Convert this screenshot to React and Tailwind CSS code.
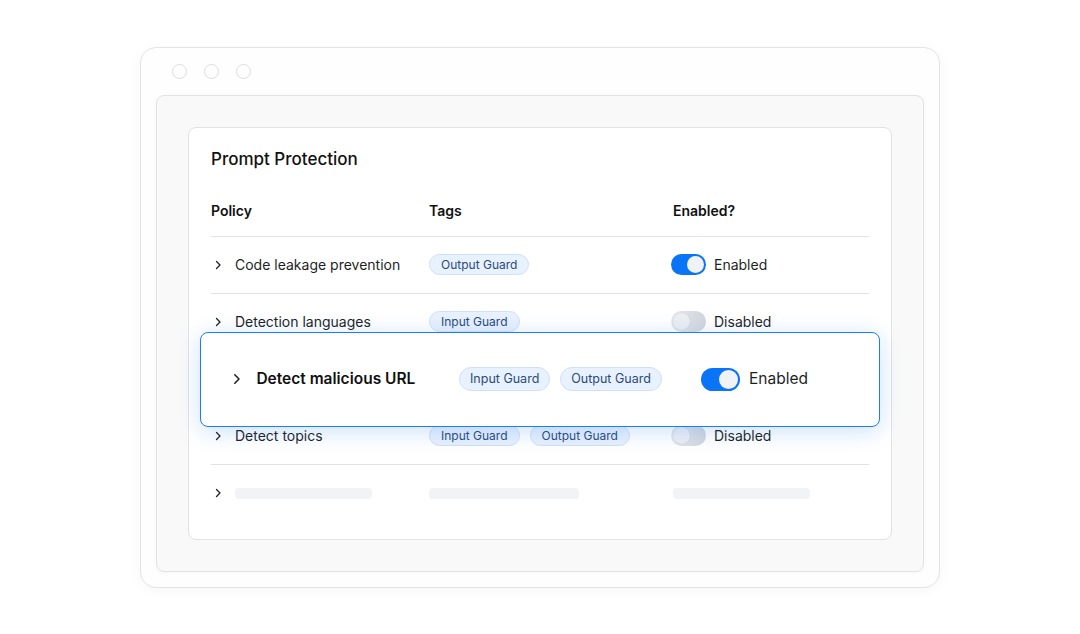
import React from "react";

const Chevron = ({ size = 1 }) => (
  <svg width={7 * size} height={10 * size} viewBox="0 0 7 10" fill="none" className="shrink-0">
    <path d="M1.5 1.5 L5 5 L1.5 8.5" stroke="#1f1f1f" strokeWidth="1.3" strokeLinecap="round" strokeLinejoin="round" />
  </svg>
);

const Pill = ({ children, big }) => (
  <span
    className={
      "inline-flex items-center rounded-full border border-[#cfe0fa] bg-[#e8f1fe] text-[#2b4a78] whitespace-nowrap " +
      (big ? "h-[24px] px-[10px] text-[12.5px]" : "h-[21px] px-[11px] text-[12px]")
    }
  >
    {children}
  </span>
);

const Toggle = ({ on, big }) => {
  const track = big ? "w-[39px] h-[23px]" : "w-[35px] h-[21px]";
  const knob = big ? "w-[19px] h-[19px]" : "w-[17px] h-[17px]";
  return (
    <span
      className={
        "inline-flex items-center rounded-full px-[2px] shrink-0 " +
        track +
        (on ? " bg-[#0a74f6] justify-end" : " bg-gradient-to-r from-[#e6e8ec] to-[#d2d5dc] justify-start")
      }
    >
      <span className={"rounded-full " + knob + (on ? " bg-[#f1f2f4]" : " bg-[#eceef2] shadow-[0_0_1px_rgba(0,0,0,0.15)]")} />
    </span>
  );
};

const Row = ({ name, tags, on, skeleton, hidden, last }) => (
  <div className={"flex items-center h-[57px] " + (last ? "" : "border-b border-[#e2e2e5]")}>
    {hidden ? null : (
      <>
        <div className="w-[218px] flex items-center pl-[4px] gap-[13px]">
          <Chevron />
          {skeleton ? (
            <span className="block w-[137px] h-[11px] rounded-[4px] bg-[#f2f3f5]" />
          ) : (
            <span className="text-[14px] text-[#1f1f1f]">{name}</span>
          )}
        </div>
        <div className="w-[244px] flex items-center gap-[10px]">
          {skeleton ? (
            <span className="block w-[150px] h-[11px] rounded-[4px] bg-[#f2f3f5]" />
          ) : (
            tags.map((t) => <Pill key={t}>{t}</Pill>)
          )}
        </div>
        <div className="flex items-center gap-[8px]">
          {skeleton ? (
            <span className="block w-[137px] h-[11px] rounded-[4px] bg-[#f2f3f5]" />
          ) : (
            <>
              <span className="-ml-[2px] flex">
                <Toggle on={on} />
              </span>
              <span className="text-[14px] text-[#1f1f1f]">{on ? "Enabled" : "Disabled"}</span>
            </>
          )}
        </div>
      </>
    )}
  </div>
);

export default function App() {
  return (
    <div
      className="w-[1080px] h-[634px] bg-white flex items-center justify-center"
      style={{ fontFamily: "Inter, 'Noto Sans', sans-serif" }}
    >
      <div className="w-[800px] h-[541px] rounded-[16px] border border-[#e4e4e8] bg-[#fefefe] shadow-[0_2px_14px_rgba(0,0,0,0.04)] flex flex-col px-[15px] pb-[15px]">
        <div className="h-[47px] flex items-center gap-[17px] pl-[16px]">
          <span className="w-[15px] h-[15px] rounded-full border-[1.5px] border-[#dddde2]" />
          <span className="w-[15px] h-[15px] rounded-full border-[1.5px] border-[#dddde2]" />
          <span className="w-[15px] h-[15px] rounded-full border-[1.5px] border-[#dddde2]" />
        </div>
        <div className="flex-1 rounded-[8px] border border-[#e3e3e7] bg-[#f9f9f9] shadow-[0_1px_6px_rgba(0,0,0,0.03)] p-[31px]">
          <div className="relative h-[413px] rounded-[8px] border border-[#e3e3e7] bg-white px-[22px] pt-[19px]">
            <div className="h-[24px] leading-[24px] text-[17px] font-medium text-[#111]">Prompt Protection</div>
            <div className="mt-[14px] h-[52px] flex items-center border-b border-[#e2e2e5] text-[14px] font-semibold text-[#111]">
              <div className="w-[218px]">Policy</div>
              <div className="w-[244px]">Tags</div>
              <div>Enabled?</div>
            </div>
            <Row name="Code leakage prevention" tags={["Output Guard"]} on />
            <Row name="Detection languages" tags={["Input Guard"]} on={false} />
            <Row hidden />
            <Row name="Detect topics" tags={["Input Guard", "Output Guard"]} on={false} />
            <Row skeleton last />

            <div className="absolute left-[11px] top-[204px] w-[680px] h-[95px] rounded-[8px] border-[1.5px] border-[#1a7ef5] bg-white shadow-[0_4px_22px_rgba(20,120,245,0.22)] flex items-center pl-[32px]">
              <div className="w-[226px] flex items-center gap-[15px]">
                <Chevron size={1.2} />
                <span className="text-[15.5px] font-semibold text-[#111]">Detect malicious URL</span>
              </div>
              <div className="w-[242px] flex items-center gap-[10px]">
                <Pill big>Input Guard</Pill>
                <Pill big>Output Guard</Pill>
              </div>
              <div className="flex items-center gap-[9px]">
                <Toggle on big />
                <span className="text-[15.5px] text-[#1f1f1f]">Enabled</span>
              </div>
            </div>
          </div>
        </div>
      </div>
    </div>
  );
}
